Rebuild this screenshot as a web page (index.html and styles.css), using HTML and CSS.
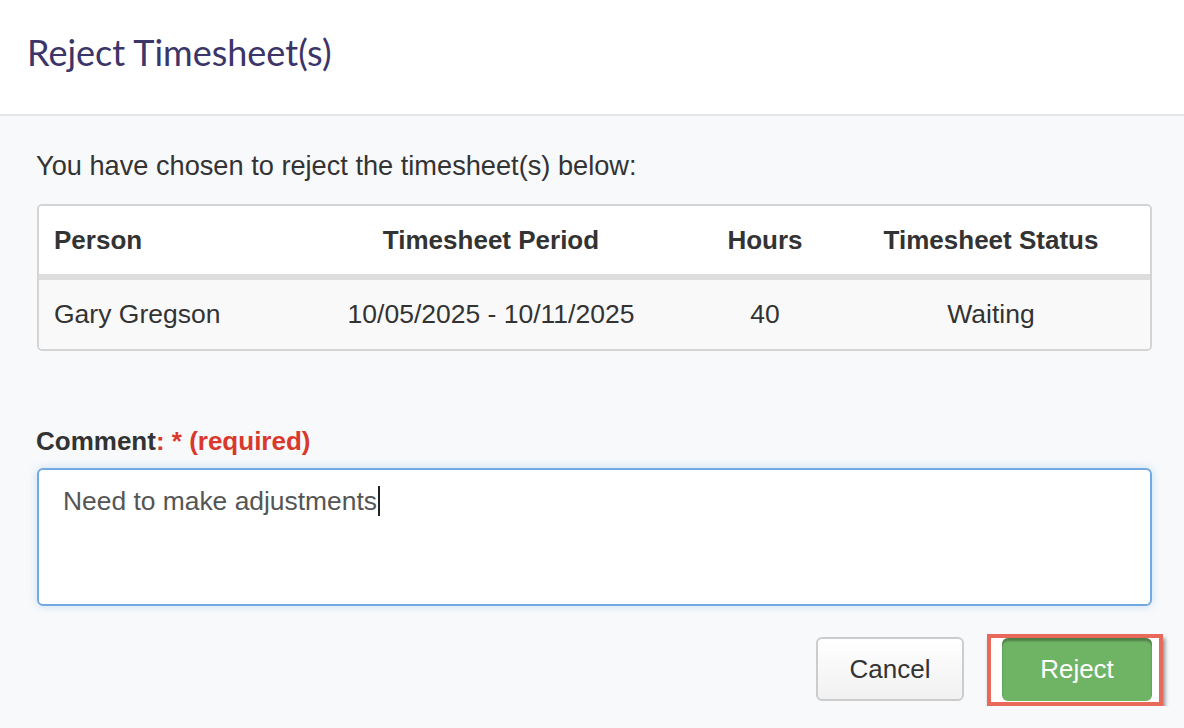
FILE: index.html
```html
<!DOCTYPE html>
<html lang="en" dir="ltr">
  <head>
    <meta charset="utf-8">
    <title>Reject Timesheet(s)</title>
    <link rel="stylesheet" href="styles.css">
  </head>
  <body>

    <div class="modal_header">
      <h1 class="modal_title">Reject Timesheet(s)</h1>
    </div>

    <div class="modal_body">
      <p class="intro">You have chosen to reject the timesheet(s) below:</p>

      <div class="table_holder">
        <table class="sheets">
          <colgroup>
            <col class="col_person">
            <col class="col_period">
            <col class="col_hours">
            <col class="col_status">
          </colgroup>
          <thead>
            <tr>
              <th class="left">Person</th>
              <th>Timesheet Period</th>
              <th>Hours</th>
              <th>Timesheet Status</th>
            </tr>
          </thead>
          <tbody>
            <tr>
              <td class="left">Gary Gregson</td>
              <td>10/05/2025 - 10/11/2025</td>
              <td>40</td>
              <td>Waiting</td>
            </tr>
          </tbody>
        </table>
      </div>

      <label class="comment_label" for="comment">Comment<span class="req">: * (required)</span></label>
      <div class="comment_box" id="comment">Need to make adjustments<span class="caret"></span></div>

      <div class="actions">
        <button class="btn btn_cancel">Cancel</button>
        <span class="highlight">
          <button class="btn btn_reject">Reject</button>
        </span>
      </div>
    </div>

  </body>
</html>
```

FILE: styles.css
```css
body{
  margin: 0;
  background-color: #f8f9fb;
  font-family: "Liberation Sans", Arial, sans-serif;
  color: #333333;
}

.modal_header{
  background-color: #ffffff;
  height: 116px;
  border-bottom: 2px solid #e4e5e7;
  display: flex;
  align-items: center;
  padding-left: 27px;
  box-sizing: border-box;
}

.modal_title{
  margin: 0;
  margin-top: -10px;
  font-family: Lato, "Open Sans", sans-serif;
  font-weight: normal;
  font-size: 36px;
  color: #3b3569;
}

.modal_body{
  padding: 0 32px 0 36px;
}

.intro{
  margin: 0;
  padding-top: 35px;
  font-size: 27.2px;
  line-height: 30px;
}

.table_holder{
  margin-top: 23px;
  margin-left: 1px;
  border: 2px solid #d4d4d4;
  border-radius: 5px;
  overflow: hidden;
}

.sheets{
  width: 100%;
  border-collapse: collapse;
  table-layout: fixed;
  font-size: 26.5px;
}

.col_person{ width: 245px; }
.col_period{ width: 414px; }
.col_hours{ width: 134px; }
.col_status{ width: 318px; }

.sheets th{
  background-color: #ffffff;
  height: 68px;
  padding: 0 15px;
  text-align: center;
  font-size: 26px;
  font-weight: bold;
  border-bottom: 6px solid #dddddd;
}

.sheets td{
  background-color: #f9f9f9;
  height: 69px;
  padding: 0 15px;
  text-align: center;
}

.sheets .left{
  text-align: left;
}

.comment_label{
  display: block;
  margin-top: 75px;
  font-size: 26px;
  font-weight: bold;
  line-height: 30px;
}

.req{
  color: #d9392c;
}

.comment_box{
  margin-top: 12px;
  margin-left: 1px;
  height: 138px;
  background-color: #ffffff;
  border: 2px solid #73a9e3;
  border-radius: 6px;
  box-shadow: 0 0 8px rgba(102,175,233,0.35);
  padding: 16px 24px;
  box-sizing: border-box;
  font-size: 26.4px;
  line-height: 30px;
  color: #555555;
}

.caret{
  display: inline-block;
  width: 2px;
  height: 30px;
  margin-left: 1px;
  vertical-align: top;
  background-color: #222222;
}

.actions{
  display: flex;
  justify-content: flex-end;
  align-items: flex-start;
  margin-top: 31px;
}

.btn{
  font-family: "Liberation Sans", Arial, sans-serif;
  font-size: 26px;
  border-radius: 6px;
  cursor: pointer;
}

.btn_cancel{
  width: 148px;
  height: 64px;
  border: 2px solid #cccccc;
  background: linear-gradient(#ffffff, #f1f1f1);
  color: #333333;
}

.highlight{
  display: block;
  position: relative;
  width: 176px;
  height: 72px;
  margin-left: 23px;
  margin-right: -11px;
  margin-top: -3px;
  box-sizing: border-box;
  border: 4px solid #e8695a;
  background-color: #ffffff;
  box-shadow: 2px 4px 4px rgba(0,0,0,0.45);
  padding: 0 7px 0 11px;
}

.btn_reject{
  display: block;
  width: 150px;
  height: 63px;
  border: none;
  background-color: #6fb465;
  box-shadow: inset 0 3px 2px rgba(0,0,0,0.3);
  color: #ffffff;
}
```
